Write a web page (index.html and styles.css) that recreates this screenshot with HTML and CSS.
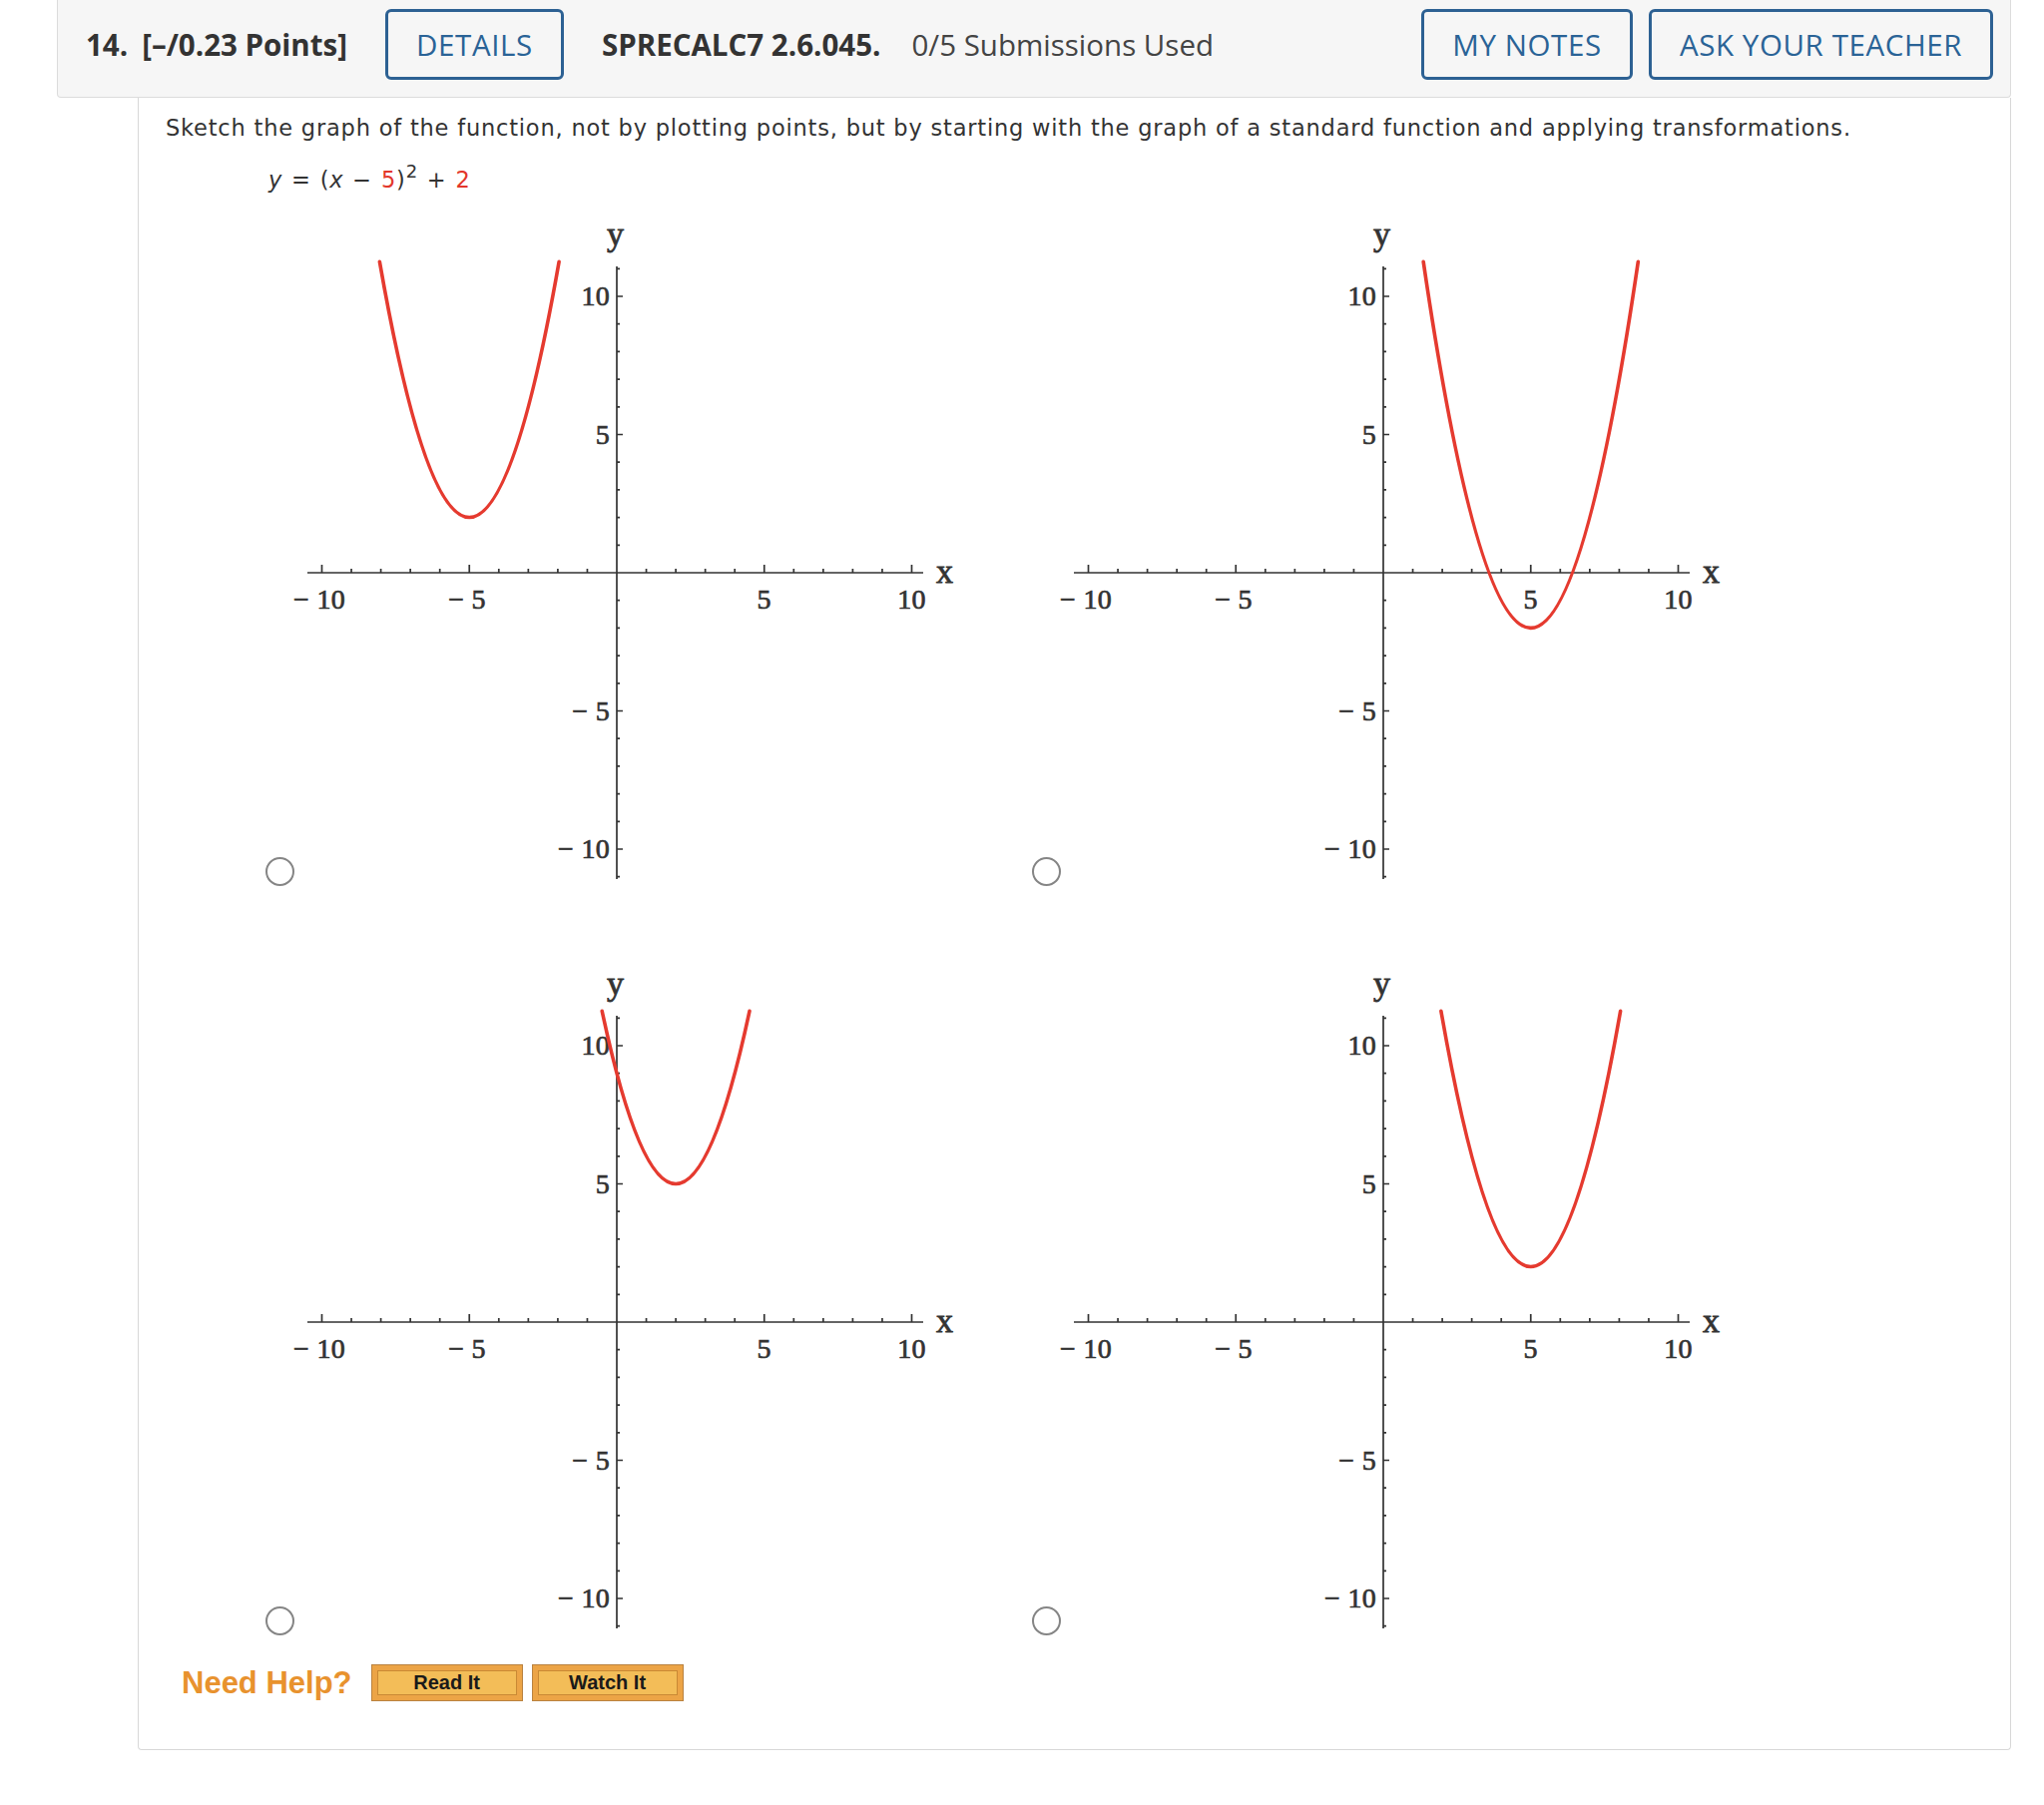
FILE: index.html
```html
<!DOCTYPE html>
<html lang="en">
<head>
<meta charset="utf-8">
<title>Question 14</title>
<link rel="stylesheet" href="styles.css">
</head>
<body>
<div class="page">
  <div class="qhead">
    <span class="qnum">14.</span>
    <span class="qpts">[–/0.23 Points]</span>
    <span class="btn btn-details">DETAILS</span>
    <span class="qref">SPRECALC7 2.6.045.</span>
    <span class="qsub">0/5 Submissions Used</span>
    <span class="spacer"></span>
    <span class="btn btn-notes">MY NOTES</span>
    <span class="btn btn-ask">ASK YOUR TEACHER</span>
  </div>
  <div class="qbody">
    <p class="prompt">Sketch the graph of the function, not by plotting points, but by starting with the graph of a standard function and applying transformations.</p>
    <p class="eq"><i>y</i> = (<i>x</i> − <span class="red">5</span>)<sup>2</sup> + <span class="red">2</span></p>
    <div class="choices">
      <div class="choice">
        <span class="radio"></span>
        <svg class="graph" width="674" height="680" viewBox="-10 -20 674 680">
          <path class="axis" d="M12 349H629M322 42V656"/>
          <path class="tick" d="M26.5 349v-8M174.25 349v-8M469.75 349v-8M617.5 349v-8M56.05 349v-4M85.6 349v-4M115.15 349v-4M144.7 349v-4M203.8 349v-4M233.35 349v-4M262.9 349v-4M292.45 349v-4M351.55 349v-4M381.1 349v-4M410.65 349v-4M440.2 349v-4M499.3 349v-4M528.85 349v-4M558.4 349v-4M587.95 349v-4M322 72h6M322 210.5h6M322 487.5h6M322 626h6M322 44.3h3M322 99.7h3M322 127.4h3M322 155.1h3M322 182.8h3M322 238.2h3M322 265.9h3M322 293.6h3M322 321.3h3M322 376.7h3M322 404.4h3M322 432.1h3M322 459.8h3M322 515.2h3M322 542.9h3M322 570.6h3M322 598.3h3M322 653.7h3"/>
          <text class="lbl lx" x="24" y="385">− 10</text>
          <text class="lbl lx" x="172" y="385">− 5</text>
          <text class="lbl lx" x="469.75" y="385">5</text>
          <text class="lbl lx" x="617.5" y="385">10</text>
          <text class="lbl ly" x="315" y="81">10</text>
          <text class="lbl ly" x="315" y="219.5">5</text>
          <text class="lbl ly" x="315" y="496.5">− 5</text>
          <text class="lbl ly" x="315" y="635">− 10</text>
          <text class="axlbl" x="321" y="21">y</text>
          <text class="axlbl" x="651" y="359">x</text>
          <path class="curve" d="M84.39 37.37Q174.25 549.71 264.11 37.37"/>
        </svg>
      </div>
      <div class="choice">
        <span class="radio"></span>
        <svg class="graph" width="674" height="680" viewBox="-10 -20 674 680">
          <path class="axis" d="M12 349H629M322 42V656"/>
          <path class="tick" d="M26.5 349v-8M174.25 349v-8M469.75 349v-8M617.5 349v-8M56.05 349v-4M85.6 349v-4M115.15 349v-4M144.7 349v-4M203.8 349v-4M233.35 349v-4M262.9 349v-4M292.45 349v-4M351.55 349v-4M381.1 349v-4M410.65 349v-4M440.2 349v-4M499.3 349v-4M528.85 349v-4M558.4 349v-4M587.95 349v-4M322 72h6M322 210.5h6M322 487.5h6M322 626h6M322 44.3h3M322 99.7h3M322 127.4h3M322 155.1h3M322 182.8h3M322 238.2h3M322 265.9h3M322 293.6h3M322 321.3h3M322 376.7h3M322 404.4h3M322 432.1h3M322 459.8h3M322 515.2h3M322 542.9h3M322 570.6h3M322 598.3h3M322 653.7h3"/>
          <text class="lbl lx" x="24" y="385">− 10</text>
          <text class="lbl lx" x="172" y="385">− 5</text>
          <text class="lbl lx" x="469.75" y="385">5</text>
          <text class="lbl lx" x="617.5" y="385">10</text>
          <text class="lbl ly" x="315" y="81">10</text>
          <text class="lbl ly" x="315" y="219.5">5</text>
          <text class="lbl ly" x="315" y="496.5">− 5</text>
          <text class="lbl ly" x="315" y="635">− 10</text>
          <text class="axlbl" x="321" y="21">y</text>
          <text class="axlbl" x="651" y="359">x</text>
          <path class="curve" d="M362.19 37.37Q469.75 771.43 577.31 37.37"/>
        </svg>
      </div>
      <div class="choice">
        <span class="radio"></span>
        <svg class="graph" width="674" height="680" viewBox="-10 -20 674 680">
          <path class="axis" d="M12 349H629M322 42V656"/>
          <path class="tick" d="M26.5 349v-8M174.25 349v-8M469.75 349v-8M617.5 349v-8M56.05 349v-4M85.6 349v-4M115.15 349v-4M144.7 349v-4M203.8 349v-4M233.35 349v-4M262.9 349v-4M292.45 349v-4M351.55 349v-4M381.1 349v-4M410.65 349v-4M440.2 349v-4M499.3 349v-4M528.85 349v-4M558.4 349v-4M587.95 349v-4M322 72h6M322 210.5h6M322 487.5h6M322 626h6M322 44.3h3M322 99.7h3M322 127.4h3M322 155.1h3M322 182.8h3M322 238.2h3M322 265.9h3M322 293.6h3M322 321.3h3M322 376.7h3M322 404.4h3M322 432.1h3M322 459.8h3M322 515.2h3M322 542.9h3M322 570.6h3M322 598.3h3M322 653.7h3"/>
          <text class="lbl lx" x="24" y="385">− 10</text>
          <text class="lbl lx" x="172" y="385">− 5</text>
          <text class="lbl lx" x="469.75" y="385">5</text>
          <text class="lbl lx" x="617.5" y="385">10</text>
          <text class="lbl ly" x="315" y="81">10</text>
          <text class="lbl ly" x="315" y="219.5">5</text>
          <text class="lbl ly" x="315" y="496.5">− 5</text>
          <text class="lbl ly" x="315" y="635">− 10</text>
          <text class="axlbl" x="321" y="21">y</text>
          <text class="axlbl" x="651" y="359">x</text>
          <path class="curve" d="M307.23 37.37Q381.1 383.63 454.98 37.37"/>
        </svg>
      </div>
      <div class="choice">
        <span class="radio"></span>
        <svg class="graph" width="674" height="680" viewBox="-10 -20 674 680">
          <path class="axis" d="M12 349H629M322 42V656"/>
          <path class="tick" d="M26.5 349v-8M174.25 349v-8M469.75 349v-8M617.5 349v-8M56.05 349v-4M85.6 349v-4M115.15 349v-4M144.7 349v-4M203.8 349v-4M233.35 349v-4M262.9 349v-4M292.45 349v-4M351.55 349v-4M381.1 349v-4M410.65 349v-4M440.2 349v-4M499.3 349v-4M528.85 349v-4M558.4 349v-4M587.95 349v-4M322 72h6M322 210.5h6M322 487.5h6M322 626h6M322 44.3h3M322 99.7h3M322 127.4h3M322 155.1h3M322 182.8h3M322 238.2h3M322 265.9h3M322 293.6h3M322 321.3h3M322 376.7h3M322 404.4h3M322 432.1h3M322 459.8h3M322 515.2h3M322 542.9h3M322 570.6h3M322 598.3h3M322 653.7h3"/>
          <text class="lbl lx" x="24" y="385">− 10</text>
          <text class="lbl lx" x="172" y="385">− 5</text>
          <text class="lbl lx" x="469.75" y="385">5</text>
          <text class="lbl lx" x="617.5" y="385">10</text>
          <text class="lbl ly" x="315" y="81">10</text>
          <text class="lbl ly" x="315" y="219.5">5</text>
          <text class="lbl ly" x="315" y="496.5">− 5</text>
          <text class="lbl ly" x="315" y="635">− 10</text>
          <text class="axlbl" x="321" y="21">y</text>
          <text class="axlbl" x="651" y="359">x</text>
          <path class="curve" d="M379.89 37.37Q469.75 549.71 559.61 37.37"/>
        </svg>
      </div>
    </div>
    <div class="help">
      <span class="help-label">Need Help?</span>
      <span class="hbtn">Read It</span>
      <span class="hbtn">Watch It</span>
    </div>
  </div>
</div>
</body>
</html>
```

FILE: styles.css
```css
html, body {
  margin: 0;
  padding: 0;
  background: #ffffff;
}

.page {
  padding-left: 57px;
  width: 1958px;
}

.qhead {
  display: flex;
  align-items: center;
  box-sizing: border-box;
  height: 98px;
  padding: 9px 17px 17px 28px;
  background: #f6f6f6;
  border: 1px solid #dcdcdc;
  border-top: none;
  border-radius: 0 0 4px 4px;
  font-family: "Open Sans", "Liberation Sans", sans-serif;
  font-size: 29.5px;
  color: #333333;
}

.qnum {
  font-weight: 700;
  margin-right: 14px;
}

.qpts {
  font-weight: 700;
  margin-right: 38px;
}

.qref {
  font-weight: 700;
  margin-left: 38px;
  margin-right: 31px;
}

.qsub {
  color: #444444;
}

.spacer {
  flex: 1;
}

.btn {
  display: flex;
  align-items: center;
  justify-content: center;
  box-sizing: border-box;
  height: 71px;
  border: 3px solid #2d6193;
  border-radius: 6px;
  color: #2a6396;
  font-size: 29.5px;
  letter-spacing: 0.6px;
}

.btn-details {
  width: 179px;
}

.btn-notes {
  width: 212px;
  margin-right: 16px;
}

.btn-ask {
  width: 345px;
}

.qbody {
  margin-left: 81px;
  box-sizing: border-box;
  width: 1877px;
  border: 1px solid #d8d8d8;
  border-top: none;
  border-radius: 0 0 4px 4px;
  padding: 12px 20px 48px 27px;
  font-family: "DejaVu Sans", Verdana, sans-serif;
  font-size: 22.5px;
  letter-spacing: 0.8px;
  color: #333333;
}

.prompt {
  margin: 0;
  line-height: 36px;
}

.eq {
  margin: 16px 0 0 103px;
  line-height: 36px;
  word-spacing: 1px;
}

.eq sup {
  font-size: 18px;
  line-height: 0;
  vertical-align: 10px;
}

.red {
  color: #e3362b;
}

.choices {
  display: grid;
  grid-template-columns: 768px 768px;
  row-gap: 71px;
  margin: 7px 0 0 100px;
}

.choice {
  display: flex;
  align-items: flex-end;
}

.radio {
  display: block;
  flex: none;
  box-sizing: border-box;
  width: 29px;
  height: 29px;
  border: 2px solid #858585;
  border-radius: 50%;
  margin-bottom: -3px;
  margin-right: -9px;
}

.graph {
  display: block;
  flex: none;
}

.axis {
  fill: none;
  stroke: #333333;
  stroke-width: 1.7;
}

.tick {
  fill: none;
  stroke: #333333;
  stroke-width: 1.7;
}

.lbl {
  font-family: "Liberation Serif", serif;
  font-size: 28px;
  font-weight: 400;
  fill: #333333;
  stroke: #333333;
  stroke-width: 0.7px;
  letter-spacing: 0.3px;
}

.lx {
  text-anchor: middle;
}

.ly {
  text-anchor: end;
}

.axlbl {
  font-family: "Liberation Serif", serif;
  font-size: 34px;
  font-weight: 400;
  fill: #333333;
  stroke: #333333;
  stroke-width: 0.8px;
  text-anchor: middle;
}

.curve {
  fill: none;
  stroke: #e53a2f;
  stroke-width: 3.6;
  stroke-linecap: round;
}

.help {
  display: flex;
  align-items: center;
  margin: 32px 0 0 16px;
  letter-spacing: 0;
}

.help-label {
  font-family: "Liberation Sans", Arial, sans-serif;
  font-weight: 700;
  font-size: 31px;
  color: #e8922e;
  margin-right: 19px;
}

.hbtn {
  display: flex;
  align-items: center;
  justify-content: center;
  box-sizing: border-box;
  width: 152px;
  height: 37px;
  margin-right: 9px;
  background: #f3bd58;
  border: 1px solid #b98240;
  box-shadow: inset 0 0 0 5px #eca446, inset 0 0 0 6px #c98934;
  font-family: "Liberation Sans", Arial, sans-serif;
  font-weight: 700;
  font-size: 20px;
  color: #1a1a1a;
}
```
